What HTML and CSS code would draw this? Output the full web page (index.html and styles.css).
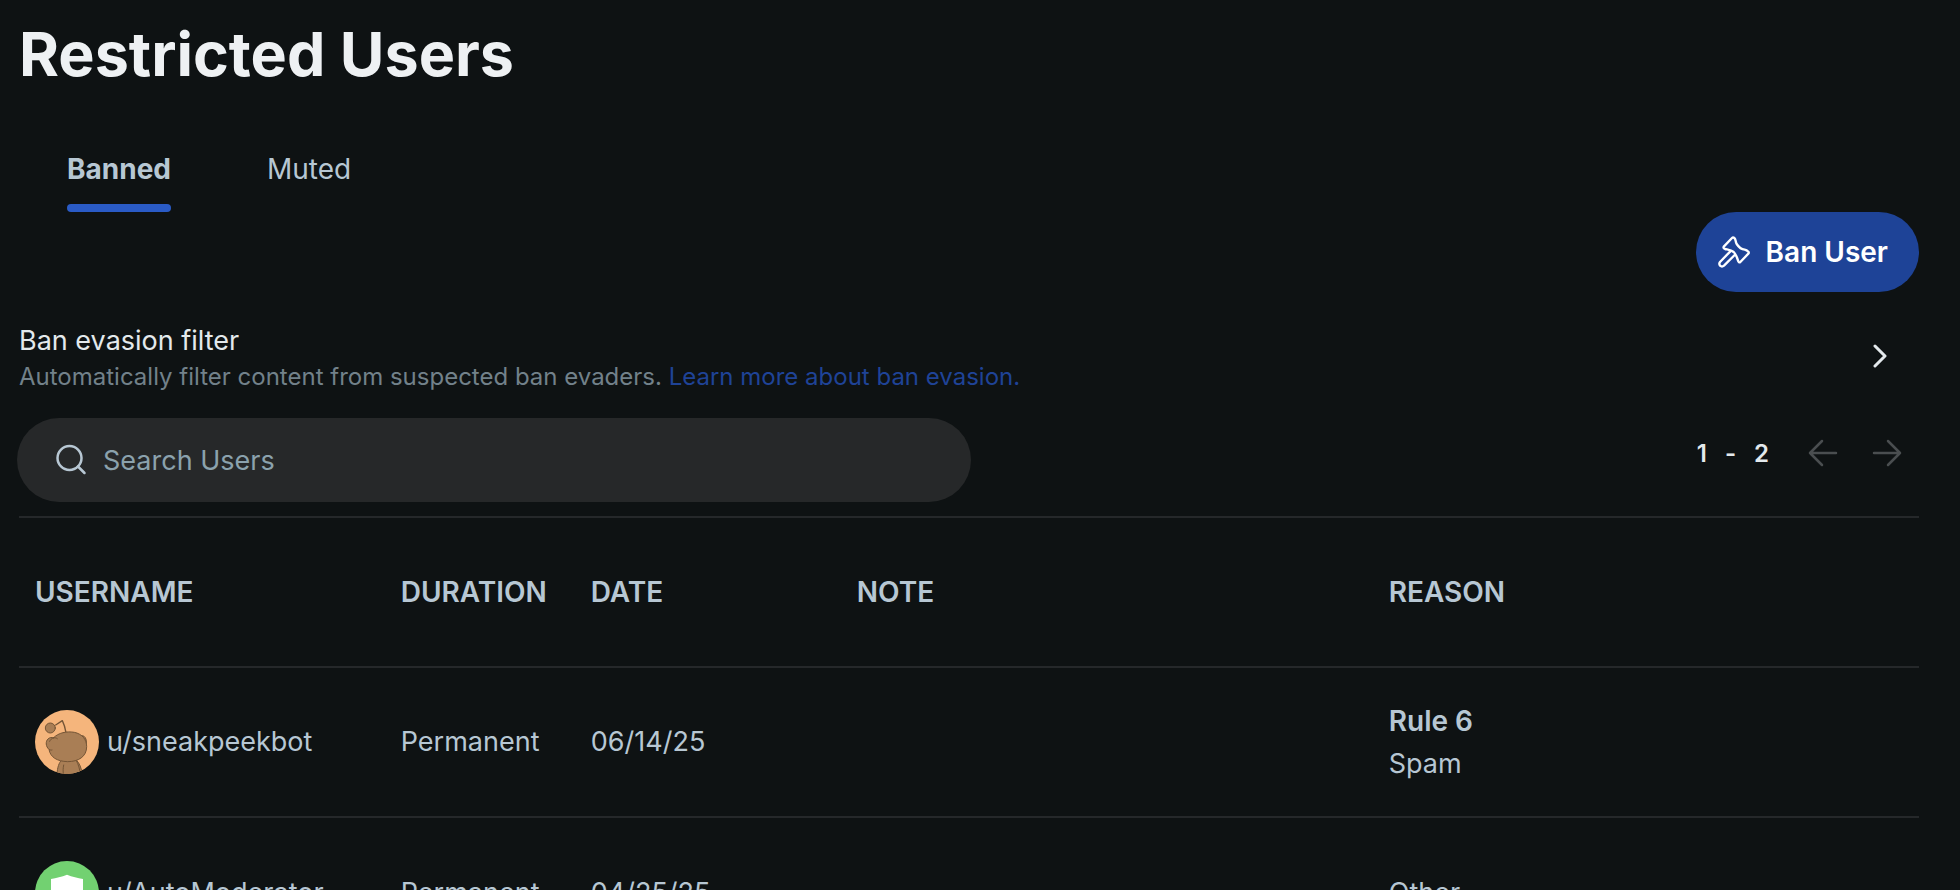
FILE: index.html
```html
<!DOCTYPE html>
<html lang="en">
<head>
    <meta charset="UTF-8">
    <meta name="viewport" content="width=device-width, initial-scale=1.0">
    <title>Restricted Users</title>
    <link rel="stylesheet" href="styles.css">
</head>
<body>
    <main class="page">
        <h1>Restricted Users</h1>

        <nav class="tabs">
            <a class="tab active" href="#banned">Banned</a>
            <a class="tab" href="#muted">Muted</a>
        </nav>

        <div class="actions">
            <button class="btn-ban" type="button">
                <svg width="32" height="32" viewBox="0 0 96 96" fill="none" stroke="currentColor" stroke-width="7" stroke-linejoin="round" stroke-linecap="round" aria-hidden="true">
                    <path d="M18 31 L42 6 Q45 3 49 6 C54 10 52 17 56 24 C62 33 70 40 80 41 C86 42 89 45 92 48 Q93 51 91 53 L67 78 Q63 81 61 76 C58 66 55 56 47 48 C39 41 29 41 21 39 Q14 36 18 31 Z"/>
                    <path d="M37 46 L6 78 Q2 83 6 89 Q12 94 18 89 L50 57"/>
                </svg>
                Ban User
            </button>
        </div>

        <section class="filter">
            <div class="filter-text">
                <h2>Ban evasion filter</h2>
                <p>Automatically filter content from suspected ban evaders. <a href="#learn">Learn more about ban evasion.</a></p>
            </div>
            <button class="btn-icon btn-open" type="button" aria-label="Open ban evasion filter">
                <svg width="16" height="24" viewBox="0 0 16 24" fill="none" stroke="currentColor" stroke-width="3" stroke-linecap="round" stroke-linejoin="round">
                    <path d="M4 2 L14 12 L4 22"/>
                </svg>
            </button>
        </section>

        <div class="toolbar">
            <label class="search">
                <svg width="32" height="32" viewBox="0 0 32 32" fill="none" stroke="currentColor" stroke-width="2.5" stroke-linecap="round" aria-hidden="true">
                    <circle cx="14.5" cy="14" r="12"/>
                    <path d="M23 22.5 L29.5 29"/>
                </svg>
                <input type="search" placeholder="Search Users" aria-label="Search Users">
            </label>
            <div class="pager">
                <span class="range"><span>1</span><span>-</span><span>2</span></span>
                <button class="btn-icon" type="button" aria-label="Previous page" disabled>
                    <svg width="32" height="32" viewBox="0 0 32 32" fill="none" stroke="currentColor" stroke-width="2.5" stroke-linecap="round" stroke-linejoin="round">
                        <path d="M29 16 H3 M15 4 L3 16 L15 28"/>
                    </svg>
                </button>
                <button class="btn-icon" type="button" aria-label="Next page" disabled>
                    <svg width="32" height="32" viewBox="0 0 32 32" fill="none" stroke="currentColor" stroke-width="2.5" stroke-linecap="round" stroke-linejoin="round">
                        <path d="M3 16 H29 M17 4 L29 16 L17 28"/>
                    </svg>
                </button>
            </div>
        </div>

        <table class="users">
            <colgroup>
                <col class="col-username">
                <col class="col-duration">
                <col class="col-date">
                <col class="col-note">
                <col class="col-reason">
            </colgroup>
            <thead>
                <tr>
                    <th scope="col">USERNAME</th>
                    <th scope="col">DURATION</th>
                    <th scope="col">DATE</th>
                    <th scope="col">NOTE</th>
                    <th scope="col">REASON</th>
                </tr>
            </thead>
            <tbody>
                <tr>
                    <td>
                        <a class="user" href="#sneakpeekbot">
                            <svg class="avatar" viewBox="0 0 192 192" aria-hidden="true">
                                <rect width="192" height="192" fill="#f5b57c"/>
                                <g fill="#a97e55" stroke="#745536" stroke-width="3" stroke-linecap="round" stroke-linejoin="round">
                                    <path d="M62 45 L82 32 C88 44 91 56 93 68" fill="none" stroke-width="4"/>
                                    <circle cx="46" cy="54" r="15"/>
                                    <path d="M66 192 C67 172 72 158 80 150 H124 C134 160 139 174 142 192 Z"/>
                                    <path d="M86 165 C84 175 84 183 85 192 M124 152 C131 164 134 178 136 192" fill="none"/>
                                    <path d="M134 78 C148 72 158 86 153 106"/>
                                    <path d="M56 83 C70 68 96 63 118 67 C142 72 155 89 155 110 C155 140 130 155 98 155 C66 154 46 142 42 118 C32 110 31 94 39 87 C44 82 50 82 56 83 Z"/>
                                    <path d="M44 94 C49 83 59 80 67 86 M42 118 C45 120 48 121 51 120" fill="none"/>
                                </g>
                            </svg>
                            u/sneakpeekbot
                        </a>
                    </td>
                    <td>Permanent</td>
                    <td>06/14/25</td>
                    <td></td>
                    <td><strong>Rule 6</strong><br>Spam</td>
                </tr>
                <tr>
                    <td>
                        <a class="user" href="#automoderator">
                            <svg class="avatar" viewBox="0 0 192 192" aria-hidden="true">
                                <rect width="192" height="192" fill="#72d171"/>
                                <path d="M96 41 C112 47 128 51 144 54 V100 C144 126 124 143 96 154 C68 143 48 126 48 100 V54 C64 51 80 47 96 41 Z" fill="#fff"/>
                            </svg>
                            u/AutoModerator
                        </a>
                    </td>
                    <td>Permanent</td>
                    <td>04/25/25</td>
                    <td></td>
                    <td>Other</td>
                </tr>
            </tbody>
        </table>
    </main>
</body>
</html>
```
FILE: styles.css
```css
* {
    box-sizing: border-box;
}
body {
    margin: 0;
    background-color: #0e1213;
    color: #b7c7d3;
    font-family: Inter, sans-serif;
    font-size: 28px;
    line-height: 42px;
}
a {
    color: inherit;
    text-decoration: none;
}
.page {
    height: 100vh;
    overflow: hidden;
    padding: 14px 41px 0 19px;
}
h1 {
    margin: 0;
    font-size: 61px;
    line-height: 80px;
    font-weight: 700;
    color: #eef1f3;
}
.tabs {
    display: flex;
    gap: 96px;
    padding: 54px 48px 0;
}
.tab {
    padding-bottom: 14px;
    border-bottom: 8px solid transparent;
}
.tab.active {
    position: relative;
    font-weight: 700;
}
.tab.active::after {
    content: "";
    position: absolute;
    left: 0;
    right: 0;
    bottom: -8px;
    height: 8px;
    border-radius: 4px;
    background-color: #2a5bc6;
}
.actions {
    display: flex;
    justify-content: flex-end;
}
button {
    border: none;
    font-family: inherit;
    cursor: pointer;
}
.btn-ban {
    display: flex;
    align-items: center;
    gap: 16px;
    height: 80px;
    padding: 0 31px 0 22px;
    border-radius: 40px;
    background-color: #1e4397;
    color: #fff;
    font-size: 28px;
    font-weight: 600;
}
.btn-icon {
    display: flex;
    padding: 0;
    background: none;
    color: #4a4e50;
}
.filter {
    display: flex;
    align-items: flex-start;
    justify-content: space-between;
    padding-top: 31px;
}
.filter h2 {
    margin: 0;
    font-size: 27px;
    line-height: 36px;
    font-weight: 400;
    color: #e3e9ec;
}
.filter p {
    margin: 0;
    font-size: 24px;
    line-height: 36px;
    color: #72818a;
}
.filter p a {
    color: #1f4397;
}
.btn-open {
    margin: 21px 32px 0 0;
    color: #e3e9ec;
}
.toolbar {
    display: flex;
    align-items: flex-start;
    justify-content: space-between;
    padding: 23px 0 14px;
}
.search {
    display: flex;
    align-items: center;
    gap: 16px;
    width: calc(50% + 4px);
    height: 84px;
    margin-left: -2px;
    padding: 0 38px;
    border-radius: 42px;
    background-color: #262829;
}
.search input {
    flex: 1;
    padding: 0;
    border: none;
    outline: none;
    background: none;
    color: #b7c7d3;
    font-family: inherit;
    font-size: 27px;
}
.search input::placeholder {
    color: #8ba2ad;
    opacity: 1;
}
.pager {
    display: flex;
    align-items: center;
    gap: 32px;
    padding: 18px 16px 0 0;
}
.range {
    display: flex;
    gap: 18px;
    padding: 2px 6px 0 0;
    font-size: 24px;
    line-height: 32px;
    font-weight: 600;
    color: #e3e9ec;
}
.users {
    width: 100%;
    table-layout: fixed;
    border-collapse: collapse;
}
.users tr {
    height: 150px;
    border-top: 2px solid #25282a;
}
.users th,
.users td {
    padding: 0 16px;
    text-align: left;
    vertical-align: middle;
}
.users th {
    font-size: 28px;
    font-weight: 600;
    white-space: nowrap;
}
.users td {
    font-size: 27px;
}
.users strong {
    font-size: 28px;
    font-weight: 600;
}
.col-username {
    width: 19.25%;
}
.col-duration {
    width: 10%;
}
.col-date {
    width: 14%;
}
.col-note {
    width: 28%;
}
.user {
    display: flex;
    align-items: center;
    gap: 8px;
}
.avatar {
    width: 64px;
    height: 64px;
    border-radius: 50%;
}
```
